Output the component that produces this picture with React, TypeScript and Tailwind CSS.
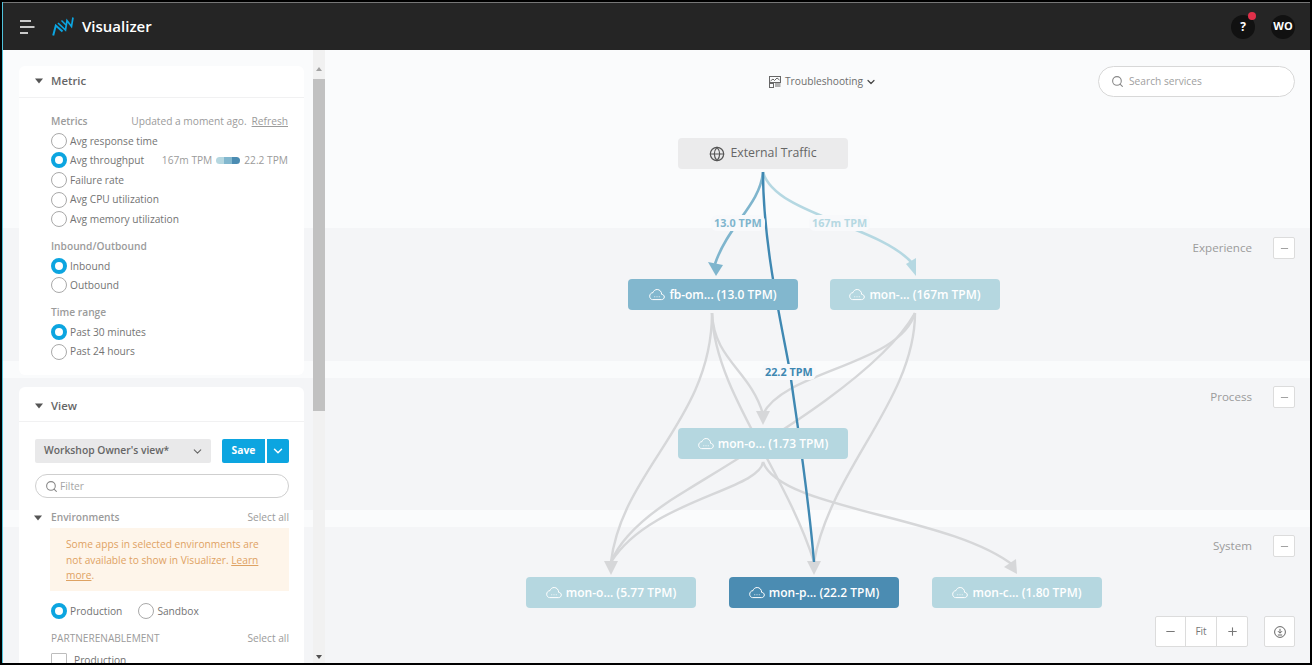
import React from "react";
import { Globe, ChevronDown, Search, Minus, Plus } from "lucide-react";

const Cloud = () => (
  <svg width="16" height="13" viewBox="0 0 16 13" fill="none" stroke="currentColor" strokeWidth="1" className="shrink-0">
    <path d="M3.6 11.6H12.6C14.2 11.6 15.3 10.4 15.3 9C15.3 7.5 14.2 6.4 12.7 6.4C12.6 3.6 10.7 1.5 8.2 1.5C6.2 1.5 4.6 2.7 4 4.6C2.1 4.7 .7 6.3 .7 8.2C.7 10.1 2 11.6 3.6 11.6Z" />
    <path d="M5.4 8.8h.8M7.6 8.8h.8M9.8 8.8h.8" strokeWidth="1.1" />
  </svg>
);

const Radio = ({ on }: { on?: boolean }) =>
  on ? (
    <span className="w-4 h-4 rounded-full border-[4.5px] border-[#0ca5e0] bg-white shrink-0" />
  ) : (
    <span className="w-4 h-4 rounded-full border border-[#a9a9a9] bg-white shrink-0" />
  );

const Opt = ({ on, children }: { on?: boolean; children: React.ReactNode }) => (
  <div className="flex items-center gap-[3px] h-[19.6px] text-[10.2px] text-[#737373] whitespace-nowrap">
    <Radio on={on} />
    <span className="pt-[1px]">{children}</span>
  </div>
);

const Caret = ({ className = "" }: { className?: string }) => (
  <svg width="8" height="6" viewBox="0 0 8 6" className={className}>
    <path d="M0 .5h8L4 5.5z" fill="#555" />
  </svg>
);

const CardHead = ({ title, cls }: { title: string; cls: string }) => (
  <div className={`flex items-center pl-[16px] gap-[8px] border-b border-[#f1f1f2] text-[11.3px] font-semibold text-[#666] ${cls}`}>
    <Caret />
    <span>{title}</span>
  </div>
);

const Band = ({ cls, label }: { cls: string; label?: string }) => (
  <div className={`flex justify-end items-start gap-[21px] pr-[15px] ${cls}`}>
    {label && (
      <>
        <span className="text-[11.6px] leading-[22px] text-[#9b9b9b]">{label}</span>
        <span className="w-[22px] h-[22px] bg-white border border-[#dcdcdc] rounded-[2px] flex items-center justify-center">
          <Minus size={11} color="#999" />
        </span>
      </>
    )}
  </div>
);

const Node = ({ cls, children }: { cls: string; children: React.ReactNode }) => (
  <div className={`absolute w-[170px] h-[31px] rounded-[4px] flex items-center justify-center gap-[4px] text-[12px] font-semibold text-white ${cls}`}>
    {children}
  </div>
);

const Edge = ({ l, t, c, children }: { l: string; t: string; c: string; children: React.ReactNode }) => (
  <div className={`absolute px-[3px] h-[16px] leading-[16px] rounded-[6px] bg-[#f8f9fb] text-[10.8px] font-bold whitespace-nowrap ${l} ${t} ${c}`}>
    {children}
  </div>
);

const G = "#d6d7d9";
const grays = [
  "M712 313C712 420 622 470 611 562",
  "M712 313C714 360 750 370 763 414",
  "M712 313C714 390 785 470 814 562",
  "M915 313C900 365 785 370 763 414",
  "M915 313C880 375 760 445 687 490C650 512 622 535 611 562",
  "M915 313C915 400 830 470 814 562",
  "M763 462C760 490 650 500 611 562",
  "M763 462C780 510 950 515 1014 566",
];
const heads: [number, number][] = [
  [611, 575],
  [763, 425],
  [814, 575],
];

export default function App() {
  return (
    <div className="w-[1312px] h-[665px] bg-black pt-[2px] pl-[2px] pr-[2px] pb-[2px] overflow-hidden font-['Open_Sans',sans-serif]">
      <div className="w-full h-full flex flex-col border-l border-[#4fc3dc]">
        <header className="h-[48px] shrink-0 bg-[#252525] border-t border-[#777] flex items-center pl-[17px] pr-[15px] text-white">
          <svg width="15" height="14" viewBox="0 0 15 14" fill="none" stroke="#fff" strokeWidth="1.6">
            <path d="M0 1h11M0 7h14.5M0 13h8" />
          </svg>
          <svg width="22" height="19" viewBox="0 0 22 19" fill="none" stroke="#0ca5e0" className="ml-[17px]">
            <path d="M1.2 18.5L3.8 8.5L10.5 14.5" strokeWidth="2" />
            <path d="M6 6L13.5 13L15 3.5L19.5 9.5L21 .5" strokeWidth="1.7" />
            <path d="M9.5 3.5L14 8" strokeWidth="1.5" />
          </svg>
          <span className="ml-[8px] text-[15px] font-semibold">Visualizer</span>
          <div className="ml-auto relative w-[24px] h-[24px] rounded-full bg-[#111] flex items-center justify-center text-[12px] font-bold">
            ?
            <span className="absolute right-[-1px] top-[-3px] w-[8px] h-[8px] rounded-full bg-[#e0304a]" />
          </div>
          <div className="ml-[16px] w-[24px] h-[24px] rounded-full bg-[#111] flex items-center justify-center text-[11px] font-bold">WO</div>
        </header>

        <main className="relative flex-1 flex overflow-hidden">
          <div className="absolute inset-0 flex flex-col">
            <Band cls="h-[178px] bg-[#fafbfc]" />
            <Band cls="h-[133px] bg-[#f4f5f7] pt-[9px]" label="Experience" />
            <Band cls="h-[17px] bg-[#fafbfc]" />
            <Band cls="h-[132px] bg-[#f4f5f7] pt-[8px]" label="Process" />
            <Band cls="h-[17px] bg-[#fafbfc]" />
            <Band cls="flex-1 bg-[#f4f5f7] pt-[8px]" label="System" />
          </div>

          {/* sidebar */}
          <aside className="relative w-[322px] shrink-0 flex h-full">
            <div className="w-[310px] pl-[16px] pt-[16px] flex flex-col gap-[12px] overflow-hidden">
              <section className="w-[285px] shrink-0 h-[309px] bg-white rounded-[6px]">
                <CardHead title="Metric" cls="h-[32px] pb-[1px]" />
                <div className="pl-[32px] pr-[16px] pt-[15px]">
                  <div className="flex items-center h-[16px] pt-[1px] text-[10.2px] text-[#9b9b9b]">
                    <span className="font-semibold">Metrics</span>
                    <span className="ml-auto">Updated a moment ago.</span>
                    <span className="ml-[5px] underline">Refresh</span>
                  </div>
                  <div className="mt-[2px]">
                    <Opt>Avg response time</Opt>
                    <div className="flex items-center">
                      <Opt on>Avg throughput</Opt>
                      <div className="ml-auto flex items-center gap-[4px] text-[10.2px] text-[#9b9b9b]">
                        <span>167m TPM</span>
                        <span className="w-[24px] h-[7px] rounded-full flex overflow-hidden">
                          <span className="w-[8px] bg-[#b5d7e0]" />
                          <span className="w-[8px] bg-[#82b7ce]" />
                          <span className="w-[8px] bg-[#4b8cb2]" />
                        </span>
                        <span>22.2 TPM</span>
                      </div>
                    </div>
                    <Opt>Failure rate</Opt>
                    <Opt>Avg CPU utilization</Opt>
                    <Opt>Avg memory utilization</Opt>
                  </div>
                  <div className="mt-[9px] h-[16px] leading-[16px] text-[10.2px] font-semibold text-[#9b9b9b]">Inbound/Outbound</div>
                  <div className="mt-[2px]">
                    <Opt on>Inbound</Opt>
                    <Opt>Outbound</Opt>
                  </div>
                  <div className="mt-[9px] h-[16px] leading-[16px] text-[10.2px] font-semibold text-[#9b9b9b]">Time range</div>
                  <div className="mt-[2px]">
                    <Opt on>Past 30 minutes</Opt>
                    <Opt>Past 24 hours</Opt>
                  </div>
                </div>
              </section>

              <section className="w-[285px] shrink-0 bg-white rounded-t-[6px] pb-[20px]">
                <CardHead title="View" cls="h-[35px] pt-[4px]" />
                <div className="pl-[16px] pr-[15px] pt-[17px]">
                  <div className="flex items-center">
                    <div className="w-[176px] h-[24px] bg-[#e9e9ea] rounded-[2px] flex items-center pl-[9px] pr-[7px] text-[10.3px] font-semibold text-[#666]">
                      <span>Workshop Owner's view*</span>
                      <ChevronDown size={13} className="ml-auto" />
                    </div>
                    <div className="ml-[11px] w-[43px] h-[24px] pb-[1px] bg-[#0ca5e0] rounded-l-[2px] flex items-center justify-center text-[10.3px] font-bold text-white">Save</div>
                    <div className="ml-[2px] w-[22px] h-[24px] bg-[#0ca5e0] rounded-r-[2px] flex items-center justify-center text-white">
                      <ChevronDown size={14} strokeWidth={2.5} />
                    </div>
                  </div>
                  <div className="mt-[11px] h-[24px] rounded-full border border-[#cfcfcf] flex items-center pl-[9px] gap-[2px] text-[10.2px] text-[#a5a5a5]">
                    <Search size={13} color="#888" />
                    <span className="pt-[1px]">Filter</span>
                  </div>
                  <div className="mt-[11px] flex items-center h-[16px] pt-[1px] text-[10.2px] text-[#9b9b9b]">
                    <Caret className="ml-[-1px] mr-[9px]" />
                    <span className="font-semibold">Environments</span>
                    <span className="ml-auto">Select all</span>
                  </div>
                  <div className="mt-[3px] ml-[15px] h-[63px] bg-[#fef5ea] pl-[16px] pr-[20px] pt-[9px] text-[10.2px] leading-[15.7px] text-[#dea263]">
                    Some apps in selected environments are not available to show in Visualizer. <span className="underline">Learn</span> <span className="underline">more</span>.
                  </div>
                  <div className="mt-[10px] ml-[16px] flex gap-[16px]">
                    <Opt on>Production</Opt>
                    <Opt>Sandbox</Opt>
                  </div>
                  <div className="mt-[10px] ml-[16px] flex items-center h-[16px] text-[10.1px] text-[#9b9b9b]">
                    <span>PARTNERENABLEMENT</span>
                    <span className="ml-auto text-[10.2px]">Select all</span>
                  </div>
                  <div className="mt-[6px] ml-[16px] flex items-center gap-[7px] text-[10.2px] text-[#737373]">
                    <span className="w-4 h-4 border border-[#bdbdbd] bg-white rounded-[1px]" />
                    <span>Production</span>
                  </div>
                </div>
              </section>
            </div>
            <div className="w-[12px] h-full bg-[#f1f1f1] flex flex-col items-center">
              <div className="h-[29px] shrink-0 flex items-center justify-center pt-[8px]">
                <span className="w-0 h-0 border-x-[3px] border-x-transparent border-b-[4px] border-b-[#a3a3a3]" />
              </div>
              <div className="w-full h-[332px] shrink-0 bg-[#c1c1c1]" />
              <div className="mt-auto mb-[4px] w-0 h-0 border-x-[3px] border-x-transparent border-t-[4px] border-t-[#505050]" />
            </div>
          </aside>

          {/* canvas */}
          <div className="relative flex-1">
            <div className="absolute left-[444px] top-[24px] flex items-center gap-[4px] text-[10.2px] text-[#6d6d6d] whitespace-nowrap">
              <svg width="12" height="12" viewBox="0 0 12 12" fill="none" stroke="#666" strokeWidth="1">
                <rect x=".5" y=".5" width="11" height="6" />
                <path d="M1.5 5L4 3L5.5 4.5L8 2L10.5 4" />
                <rect x=".5" y="7.5" width="4" height="4" />
                <path d="M6 8h5.5M6 10h5.5" />
              </svg>
              <span>Troubleshooting</span>
              <ChevronDown size={12} strokeWidth={2.4} color="#444" className="ml-[-2px]" />
            </div>
            <div className="absolute left-[773px] top-[16px] w-[197px] h-[31px] bg-white rounded-full border border-[#d8d8d8] flex items-center pl-[12px] gap-[5px] text-[10.2px] text-[#a0a0a0]">
              <Search size={13} color="#888" />
              <span>Search services</span>
            </div>

            <svg className="absolute inset-0" width="985" height="613" viewBox="325 50 985 613" fill="none">
              {grays.map((d, i) => (
                <path key={i} d={d} stroke={G} strokeWidth="2.4" />
              ))}
              {heads.map(([x, y], i) => (
                <path key={i} d={`M${x} ${y}L${x - 7} ${y - 14}H${x + 7}Z`} fill={G} />
              ))}
              <path d="M1017 574L1004 567L1016 559Z" fill={G} />
              <path d="M763 172C760 205 728 225 715 264" stroke="#7fb5cd" strokeWidth="2.6" />
              <path d="M716 276L708 262L723 265Z" fill="#7fb5cd" />
              <path d="M763 172C775 215 880 225 913 264" stroke="#b5d8e2" strokeWidth="2.6" />
              <path d="M916 276L906 264L916 258Z" fill="#b5d8e2" />
              <path d="M763 172C763 250 785 340 790 372C798 430 808 490 814 562" stroke="#3f88b2" strokeWidth="2.4" />
            </svg>

            <Edge l="left-[386px]" t="top-[165px]" c="text-[#7fb5cd]">13.0 TPM</Edge>
            <Edge l="left-[484px]" t="top-[165px]" c="text-[#b5d8e2]">167m TPM</Edge>
            <Edge l="left-[437px]" t="top-[314px]" c="text-[#3f88b2]">22.2 TPM</Edge>

            <Node cls="left-[353px] top-[88px] bg-[#ebebec] !text-[#666] !gap-[5px]">
              <Globe size={16} color="#555" strokeWidth={1.8} />
              <span className="font-medium text-[12.3px]">External Traffic</span>
            </Node>
            <Node cls="left-[303px] top-[229px] bg-[#82b7ce]"><Cloud />fb-om... (13.0 TPM)</Node>
            <Node cls="left-[505px] top-[229px] bg-[#b5d7e0]"><Cloud />mon-... (167m TPM)</Node>
            <Node cls="left-[353px] top-[378px] bg-[#b5d7e0]"><Cloud />mon-o... (1.73 TPM)</Node>
            <Node cls="left-[201px] top-[527px] bg-[#b5d7e0]"><Cloud />mon-o... (5.77 TPM)</Node>
            <Node cls="left-[404px] top-[527px] bg-[#4b8cb2]"><Cloud />mon-p... (22.2 TPM)</Node>
            <Node cls="left-[607px] top-[527px] bg-[#b5d7e0]"><Cloud />mon-c... (1.80 TPM)</Node>

            <div className="absolute left-[830px] top-[566px] h-[31px] flex bg-white border border-[#dcdcdc] rounded-[2px] divide-x divide-[#dcdcdc] text-[10px] text-[#777]">
              <span className="w-[30px] flex items-center justify-center"><Minus size={13} color="#777" /></span>
              <span className="w-[31px] flex items-center justify-center">Fit</span>
              <span className="w-[30px] flex items-center justify-center"><Plus size={13} color="#777" /></span>
            </div>
            <div className="absolute left-[939px] top-[566px] w-[31px] h-[31px] bg-white border border-[#dcdcdc] rounded-[2px] flex items-center justify-center">
              <svg width="12" height="12" viewBox="0 0 12 12" fill="none" stroke="#666" strokeWidth="1">
                <circle cx="6" cy="6" r="5.4" />
                <path d="M6 2.8V7M4 5.2L6 7.2L8 5.2M3.8 9h4.4" />
              </svg>
            </div>
          </div>
        </main>
      </div>
    </div>
  );
}
